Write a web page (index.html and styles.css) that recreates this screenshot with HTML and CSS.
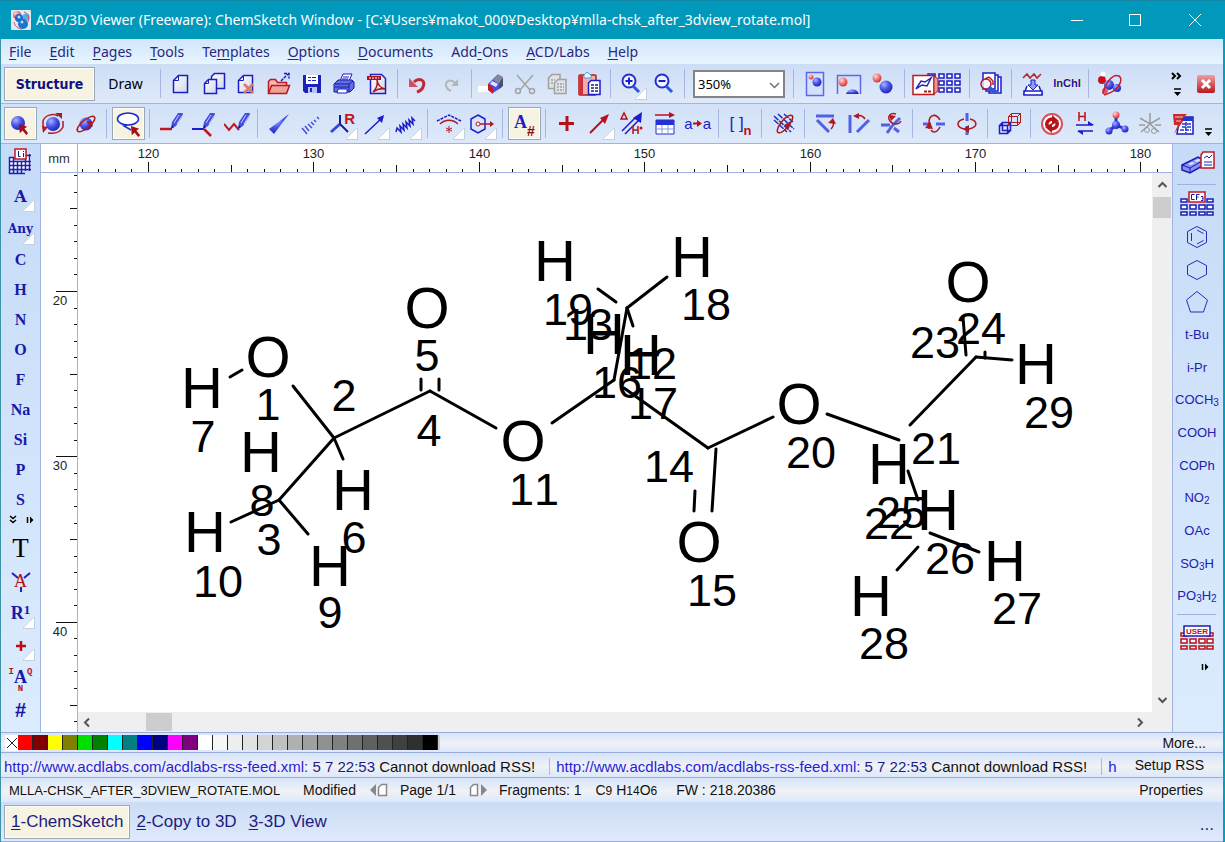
FILE: index.html
```html
<!DOCTYPE html>
<html lang="en">
<head>
<meta charset="utf-8">
<title>ACD/3D Viewer (Freeware): ChemSketch Window</title>
<link rel="stylesheet" href="styles.css">
</head>
<body>
<svg class="defs" width="0" height="0" aria-hidden="true">
  <defs>
    <radialGradient id="gb" cx=".35" cy=".3" r=".75"><stop offset="0" stop-color="#a9b4ff"/><stop offset=".5" stop-color="#4a55e8"/><stop offset="1" stop-color="#2020b8"/></radialGradient>
    <radialGradient id="gr" cx=".35" cy=".3" r=".75"><stop offset="0" stop-color="#ffd8d4"/><stop offset=".6" stop-color="#ec6a66"/><stop offset="1" stop-color="#c83038"/></radialGradient>
    <linearGradient id="gw" x1="0" y1="0" x2="1" y2="1"><stop offset="0" stop-color="#fff"/><stop offset="1" stop-color="#cfd6e6"/></linearGradient>
    <linearGradient id="gx" x1="0" y1="0" x2="0" y2="1"><stop offset="0" stop-color="#f0a0a0"/><stop offset="1" stop-color="#b81820"/></linearGradient>
    <symbol id="cursor" viewBox="0 0 12 13"><path fill="#a80c14" d="M1 1l9 3-3 2 4 5-2 2-4-5-3 3z"/></symbol>
    <symbol id="pen" viewBox="0 0 12 16"><path fill="#4450e0" d="M0 16l1-7 6-9h5l-1 4-6 9z"/><path d="M3 10l5-8M6 11l5-8" stroke="#c4ccff"/><path d="M0 16l1-4 2 2z" fill="#18188c"/></symbol>
  </defs>
</svg>
<div class="window">
  <header class="titlebar">
    <svg class="appicon" width="20" height="20" viewBox="0 0 20 20"><rect width="20" height="20" rx="1" fill="#dfe9f4"/><circle cx="6" cy="5" r="4" fill="url(#gr)"/><circle cx="15" cy="7" r="3.500" fill="#4fb0e8"/><circle cx="8" cy="8" r="4" fill="#1f68c8"/><circle cx="12" cy="14" r="5" fill="#1a74cc"/><path d="M3 12c1 5 5 7 8 7M13 2c4 1 6 5 4 10" fill="none" stroke="#d84858"/><circle cx="8" cy="7" r="1.500" fill="#a8e0fc"/><circle cx="11" cy="12" r="1.500" fill="#a8e0fc"/></svg>
    <h1 class="title">ACD/3D Viewer (Freeware): ChemSketch Window - [C:¥Users¥makot_000¥Desktop¥mlla-chsk_after_3dview_rotate.mol]</h1>
    <div class="caption">
      <button class="cap" aria-label="Minimize"><svg width="12" height="12"><path d="M0 6.500h12" stroke="#fff"/></svg></button>
      <button class="cap" aria-label="Maximize"><svg width="12" height="12"><path d="M.5.5h11v11H.5z" fill="none" stroke="#fff"/></svg></button>
      <button class="cap" aria-label="Close"><svg width="12" height="12"><path d="M0 0l12 12M12 0L0 12" stroke="#fff"/></svg></button>
    </div>
  </header>

  <nav class="menubar">
    <button><u>F</u>ile</button><button><u>E</u>dit</button><button><u>P</u>ages</button><button><u>T</u>ools</button><button>Te<u>m</u>plates</button><button><u>O</u>ptions</button><button><u>D</u>ocuments</button><button>Add<u>-</u>Ons</button><button><u>A</u>CD/Labs</button><button><u>H</u>elp</button>
  </nav>

  <div class="toolbar main-tools">
    <button class="mode on">Structure</button>
    <button class="mode draw">Draw</button>
    <i class="sep"></i>
    <div class="group g7">
      <button aria-label="New"><svg width="24" height="24"><path d="M9.500 3.500h9v17h-14v-12z" fill="url(#gw)" stroke="#1c1cc8" stroke-width="1.500"/><path d="M9.500 3.500v5h-5" fill="none" stroke="#1c1cc8"/></svg></button>
      <button aria-label="Duplicate"><svg width="24" height="24"><path d="M12.500 1.500h10v15h-13v-12z" fill="url(#gw)" stroke="#1c1cc8" stroke-width="1.500"/><path d="M6.500 7.500h8v14h-12v-10z" fill="url(#gw)" stroke="#1c1cc8" stroke-width="1.500"/><path d="M6.500 7.500v4h-4" fill="none" stroke="#1c1cc8"/></svg></button>
      <button aria-label="Delete page"><svg width="24" height="24"><path d="M9.500 3.500h9v17h-14v-12z" fill="url(#gw)" stroke="#1c1cc8" stroke-width="1.500"/><path d="M9.500 3.500v5h-5" fill="none" stroke="#1c1cc8"/><path d="M10 12l9 9M19 12l-9 9" stroke="#e07868" stroke-width="2.500"/></svg></button>
      <button aria-label="Open"><svg width="24" height="24"><path d="M1.500 21V9.500l2-2h5l2 3h9V14" fill="#f8b8b0" stroke="#b81820" stroke-width="1.500"/><path d="M1.500 21.500l3-8h18l-3 8z" fill="#f4a09a" stroke="#b81820" stroke-width="1.500"/><path d="M14 9l7-7M17 1.500h5v5" fill="none" stroke="#1c1cc8" stroke-width="1.500" stroke-dasharray="3 1"/></svg></button>
      <button aria-label="Save"><svg width="24" height="24"><path d="M3 3h18v18H5l-2-2z" fill="#1d22b8"/><path d="M6 3h12v9H6z" fill="#fff"/><path d="M8 5.500h8M8 8.500h8" stroke="#1d22b8" stroke-dasharray="3 1 5"/><path d="M8 15h9v6H8z" fill="#b8c4f8"/><path d="M10 16h2v4h-2z" fill="#1d22b8"/></svg></button>
      <button aria-label="Print"><svg width="24" height="24"><path d="M8 9l3-7h9l-3 7z" fill="#fff" stroke="#1c1cc8"/><path d="M11 5h6M10 7h6" stroke="#1c1cc8"/><path d="M2 12l4-4h14l2 2v6l-4 4H2z" fill="#6070e4" stroke="#18189c"/><path d="M3 12h14l4-3M3 15h14M17 12v8" stroke="#18189c" fill="none"/><path d="M6 17h9v4H5z" fill="#fff" stroke="#1c1cc8"/></svg></button>
      <button aria-label="Export PDF"><svg width="24" height="24"><path d="M5.500 2.500h11l4 4v15h-15z" fill="url(#gw)" stroke="#1c1cc8" stroke-width="1.500"/><path d="M2 4h14v4H2z" fill="#b01018"/><path d="M4 6h10" stroke="#fff" stroke-dasharray="2 1"/><path d="M8 20c4-4 5-8 4-12 1 6 4 8 8 9-4-1-8 0-12 3z" fill="none" stroke="#b01018" stroke-width="1.500"/></svg></button>
    </div>
    <i class="sep"></i>
    <div class="group g2">
      <button aria-label="Undo"><svg width="24" height="24"><path d="M8 10c5-5 12-2 9 5-1 3-3 4-6 5" fill="none" stroke="#c02838" stroke-width="3"/><path d="M3 6v9h9z" fill="#d05060"/></svg></button>
      <button aria-label="Redo" disabled><svg width="24" height="24"><path d="M16 11c-5-5-12-1-8 5 1 2 2 2 4 3" fill="none" stroke="#b4b4b8" stroke-width="2"/><path d="M19 7v7h-7z" fill="#b4b4b8"/></svg></button>
    </div>
    <i class="sep"></i>
    <div class="group g4">
      <button aria-label="Erase"><svg width="28" height="24"><path d="M0 14h17v6H0z" fill="#fff"/><path d="M10 12l9-9 5 3v9l-9 6-5-3z" fill="#4650e0"/><path d="M10 12l5 3v7l-5-4z" fill="#c41c28"/><path d="M15 8l5-6 5 3-4 7z" fill="#8088a0"/><path d="M21 12l4-7v9l-4 3z" fill="#4a5068"/><path d="M12 12l6 3 2-3-6-3z" fill="#dfe6f6"/></svg></button>
      <button aria-label="Cut" disabled><svg width="24" height="24"><path d="M4 3l13 15M20 3L7 18" stroke="#a4a4a4" stroke-width="1.500"/><g fill="none" stroke="#a4a4a4" stroke-width="1.500"><circle cx="5" cy="19" r="2.500"/><circle cx="19" cy="19" r="2.500"/></g></svg></button>
      <button aria-label="Copy" disabled><svg width="24" height="24"><g fill="#dfe3e8" stroke="#a0a0a0" stroke-width="1.500"><path d="M7 2.500h8v14H3.500V6z"/><path d="M13 7.500h8v14H9.500V11z"/></g><path d="M6 8h4M6 11h3M12 12h7M12 15h7M12 18h7" stroke="#a0a0a0" stroke-width="1.500" stroke-dasharray="2 1"/></svg></button>
      <button aria-label="Paste"><svg width="26" height="26"><rect x="2" y="4" width="17" height="20" rx="1" fill="#f2b0ac" stroke="#b81820" stroke-width="1.500"/><path d="M3 5h3v18H3z" fill="#cf3038"/><path d="M7 7V4l3-3 4 3v3z" fill="#eef4ff" stroke="#4aa0d8"/><path d="M14 9.500h9v14H11.500V12z" fill="#fff" stroke="#1c1cc8" stroke-width="1.500"/><path d="M14 14h7M14 17h7M14 20h7" stroke="#1c1c88" stroke-width="1.500" stroke-dasharray="3 1"/></svg></button>
    </div>
    <i class="sep"></i>
    <div class="group g2">
      <button class="more" aria-label="Zoom in"><svg width="24" height="24"><circle cx="10" cy="9" r="6.500" fill="#eef6ff" stroke="#2430d0" stroke-width="2"/><path d="M10 5.500v7M6.500 9h7" stroke="#1c1cc8" stroke-width="2"/><path d="M14 14l6 6" stroke="#2a58d8" stroke-width="3"/></svg></button>
      <button aria-label="Zoom out"><svg width="24" height="24"><circle cx="10" cy="9" r="6.500" fill="#eef6ff" stroke="#2430d0" stroke-width="2"/><path d="M6.500 9h7" stroke="#1c1cc8" stroke-width="2"/><path d="M14 14l6 6" stroke="#2a58d8" stroke-width="3"/></svg></button>
    </div>
    <i class="sep"></i>
    <div class="zoombox"><select aria-label="Zoom level"><option>350%</option><option>100%</option></select><svg class="chev" width="11" height="7"><path d="M1 1l4.500 4.500L10 1" fill="none" stroke="#707070" stroke-width="1.500"/></svg></div>
    <i class="sep"></i>
    <div class="group g3w">
      <button aria-label="Fit page"><svg width="24" height="26"><path d="M3.500 1.500h17v23h-17z" fill="#d4e0fc" stroke="#5c68ea" stroke-width="1.500"/><circle cx="8" cy="6" r="2.500" fill="url(#gr)"/><circle cx="14" cy="11" r="4.500" fill="url(#gb)"/></svg></button>
      <button aria-label="Fit width"><svg width="26" height="24"><path d="M1.500 22V3.500h23V22" fill="none" stroke="#5c68ea" stroke-width="1.500"/><circle cx="7" cy="10" r="4.500" fill="url(#gr)"/><path d="M10 22a7 7 0 0 1 13 0z" fill="url(#gb)"/></svg></button>
      <button aria-label="Fit structure"><svg width="24" height="24"><circle cx="6" cy="6" r="4.500" fill="url(#gr)"/><circle cx="15" cy="15" r="6.500" fill="url(#gb)"/></svg></button>
    </div>
    <i class="sep"></i>
    <div class="group gw">
      <button aria-label="Template window"><svg width="50" height="24"><g fill="#fff" stroke="#1c1cc8" stroke-width="1.500"><path d="M16 2h7v4h-7zM27 2h5v4h-5zM35 2h5v4h-5zM43 2h5v4h-5zM27 9h5v4h-5zM35 9h5v4h-5zM43 9h5v4h-5zM27 16h5v4h-5zM35 16h5v4h-5zM43 16h5v4h-5z"/></g><path d="M1 3.500h21v19H1z" fill="#fff" stroke="#b81820" stroke-width="1.500"/><path d="M22 4l4 3v12l-4 3z" fill="#e89a98" stroke="#b81820"/><path d="M4 17l5-8 4 1 6-4-4 8-5-1z" fill="none" stroke="#2424b8" stroke-width="1.500"/><path d="M12 19.500h7" stroke="#b81820" stroke-width="2" stroke-dasharray="3 1"/></svg></button>
    </div>
    <i class="sep"></i>
    <div class="group g1">
      <button aria-label="Search"><svg width="24" height="24"><g fill="#fff" stroke="#1c1cc8" stroke-width="1.500"><path d="M10 5h12v16H10z"/><path d="M7 3h12v16H7z"/><path d="M4 1h12v16H4z"/></g><path d="M10 5l4 4M10 5l-4 2M14 9v4" stroke="#b81820" fill="none" stroke-width="1.500"/><circle cx="7" cy="12" r="5" fill="#eef4ff" fill-opacity=".8" stroke="#b81820" stroke-width="1.500"/><path d="M10 15l7 6" stroke="#2a58d8" stroke-width="3"/></svg></button>
    </div>
    <i class="sep"></i>
    <div class="group g2w">
      <button aria-label="Insert spectrum"><svg width="24" height="26"><path d="M2 7l4-4 3 4 4-4 3 4 4-4" fill="none" stroke="#b02830" stroke-width="1.500"/><path d="M6 15l-3 8h18l-3-8" fill="#fff" stroke="#1c1cc8" stroke-width="1.500"/><path d="M10 9h4v5h3l-5 5-5-5h3z" fill="#8fa0f4" stroke="#1c1cc8"/><path d="M3 20h18v4H3z" fill="#fff" stroke="#1c1cc8" stroke-width="1.500"/></svg></button>
      <button class="inchi">InChI</button>
    </div>
    <i class="sep"></i>
    <div class="group g1">
      <button aria-label="3D Viewer"><svg width="26" height="26"><circle cx="5" cy="9" r="4" fill="#c8101c"/><circle cx="6" cy="3" r="2.500" fill="#fff"/><circle cx="12" cy="7" r="3.500" fill="#dfe4f4"/><circle cx="12" cy="14" r="5" fill="url(#gb)"/><circle cx="20" cy="17" r="4" fill="url(#gb)"/><circle cx="8" cy="20" r="3" fill="#dc6068"/><path d="M7 24C22 20 27 8 22 5c-6-3-14 7-16 18" fill="none" stroke="#c02030" stroke-width="1.500"/></svg></button>
    </div>
    <div class="tail">
      <button class="ovf" aria-label="More tools"><svg width="12" height="24"><path d="M1 1l3 3-3 3M6 1l3 3-3 3" fill="none" stroke="#000" stroke-width="2"/><path d="M3 17h7" stroke="#000" stroke-width="1.500"/><path d="M3 20h7l-3.500 4z"/></svg></button>
      <button class="docclose" aria-label="Close document"><svg width="18" height="18"><rect width="18" height="18" rx="2" fill="url(#gx)"/><path d="M5 5l8 8M13 5l-8 8" stroke="#fff" stroke-width="3"/></svg></button>
    </div>
  </div>

  <div class="toolbar struct-tools">
    <div class="group g3">
      <button class="on" aria-label="Select/Move"><svg width="24" height="24"><circle cx="10" cy="11" r="7" fill="url(#gb)"/><use href="#cursor" x="10" y="11" width="11" height="12"/></svg></button>
      <button aria-label="Rotate"><svg width="24" height="24"><circle cx="12" cy="12" r="7" fill="url(#gb)"/><path d="M2 15V9c2-6 10-8 15-5M22 9v6c-3 6-9 7-15 6" fill="none" stroke="#b01820" stroke-width="1.500"/><path d="M14 1h7v6zM1 14l6 1-5 6z" fill="#b01820"/></svg></button>
      <button aria-label="3D Rotate"><svg width="24" height="24"><circle cx="12" cy="12" r="6.500" fill="url(#gb)"/><ellipse cx="12" cy="12" rx="11" ry="4" transform="rotate(-40 12 12)" fill="none" stroke="#b01820" stroke-width="1.500"/><path d="M14 14l3-3M13 10h5v5z" stroke="#b01820" fill="#b01820"/></svg></button>
    </div>
    <i class="sep"></i>
    <div class="group g1"><button class="on" aria-label="Lasso"><svg width="26" height="26"><ellipse cx="12" cy="8" rx="10.500" ry="6" fill="#fff" stroke="#1c2cd0" stroke-width="1.500"/><path d="M11 14l-3 1 7 4" fill="none" stroke="#1c2cd0" stroke-width="1.500"/><use href="#cursor" x="14" y="14" width="11" height="12"/></svg></button></div>
    <i class="sep"></i>
    <div class="group g3">
      <button aria-label="Draw normal"><svg width="26" height="26"><path d="M2 18h12" stroke="#c01820" stroke-width="2.500"/><use href="#pen" x="13" y="2" width="12" height="16"/></svg></button>
      <button aria-label="Draw continuous"><svg width="26" height="26"><path d="M1 18h12" stroke="#1c1cd0" stroke-width="2"/><path d="M13 18l7 7" stroke="#c01820" stroke-width="2.500"/><use href="#pen" x="12" y="2" width="12" height="16"/></svg></button>
      <button aria-label="Draw chain"><svg width="26" height="26"><path d="M0 13l5 6 5-6 5 6" fill="none" stroke="#c01820" stroke-width="2"/><use href="#pen" x="14" y="2" width="12" height="16"/></svg></button>
    </div>
    <i class="sep"></i>
    <div class="group g5n">
      <button aria-label="Up stereo bond"><svg width="24" height="24"><path d="M22 2L2 17l5 5z" fill="url(#gb)"/></svg></button>
      <button aria-label="Down stereo bond"><svg width="24" height="24"><path d="M3 16l5 6M6 14l4 5M9 12l4 4M12 10l3 3M15 8l2 2M18 5l2 2" stroke="#4450dc" stroke-width="1.500"/></svg></button>
      <button class="more" aria-label="Coordinating bonds"><svg width="28" height="28"><path d="M11 14V5" stroke="#18189c" stroke-width="2"/><path d="M11 14L2 22" stroke="#3a46dc" stroke-width="3"/><path d="M11 14l8 8" stroke="#18189c" stroke-width="2"/></svg><b class="rmark">R</b></button>
      <button class="more" aria-label="Arrow bond"><svg width="24" height="24"><path d="M2 22L20 5" stroke="#1c1cc8" stroke-width="1.500"/><path d="M14 6l7-3-2 8z" fill="#1c1cc8"/></svg></button>
      <button class="more" aria-label="Undefined bond"><svg width="24" height="24"><path d="M1 20l1-4 4 4-1-6 4 4-1-6 4 4-1-6 4 4-1-6 4 4-1-6 3 3" fill="none" stroke="#1c1cc8" stroke-width="1.500"/></svg></button>
    </div>
    <i class="sep"></i>
    <div class="group g2">
      <button class="more" aria-label="Bond fragment"><svg width="26" height="26"><path d="M1 10l12-6 12 6" fill="none" stroke="#1c1cc8" stroke-width="1.500" stroke-dasharray="3 1"/><path d="M4 13c5-5 13-5 18 0" fill="none" stroke="#b01820" stroke-width="1.500"/><path d="M13 15v7M10 17l6 3M16 17l-6 3" stroke="#b01820"/></svg></button>
      <button class="more" aria-label="Ring"><svg width="26" height="26"><path d="M9 4l7 4v10l-7 4-7-4V8z" fill="none" stroke="#1c1cc8" stroke-width="1.500"/><circle cx="9" cy="13" r="2" fill="#fff" stroke="#b01820"/><path d="M11 13h12" stroke="#b01820" stroke-width="1.500"/><path d="M21 10l4 3-4 3z" fill="#b01820"/></svg></button>
    </div>
    <i class="sep"></i>
    <div class="group g1"><button class="on glyph" aria-label="Auto numbering"><b class="anum">A</b><b class="hash">#</b></button></div>
    <i class="sep"></i>
    <div class="group g5">
      <button aria-label="Reaction plus"><svg width="24" height="24"><path d="M12 4v15M4 11.500h15" stroke="#b81018" stroke-width="3"/></svg></button>
      <button class="more" aria-label="Reaction arrow"><svg width="24" height="24"><path d="M2 21L15 8" stroke="#b81018" stroke-width="2"/><path d="M12 6l9-4-4 10z" fill="#b81018"/></svg></button>
      <button aria-label="Reaction conditions"><svg width="26" height="26"><path d="M3 20L17 6M6 23L20 9" stroke="#1c1cc8" stroke-width="1.500"/><path d="M14 7l9-6-1 11z" fill="#1c1cc8"/><path d="M2 8l3-6 3 6zM14 15v8M19 15v8M14 19h5" fill="none" stroke="#b81018" stroke-width="1.500"/><circle cx="22" cy="17" r="1.500" fill="#b81018"/></svg></button>
      <button aria-label="Table"><svg width="24" height="26"><path d="M2 4h17" stroke="#b81018" stroke-width="1.500"/><path d="M16 1l6 3-6 3z" fill="#b81018"/><path d="M3 9h18v14H3z" fill="#fff" stroke="#2430c0"/><path d="M3 9h18v5H3z" fill="#2430d8"/><path d="M3 18h18M9 14v9M15 14v9" stroke="#8898e0"/></svg></button>
      <button aria-label="Atom mapping" class="glyph map">a<svg width="10" height="9"><path d="M0 4.500h6" stroke="#b81018" stroke-width="2"/><path d="M4 1l5 3.500L4 8z" fill="#b81018"/></svg>a</button>
    </div>
    <i class="sep"></i>
    <div class="group g1"><button class="glyph brak" aria-label="Brackets">[ ]<small>n</small></button></div>
    <i class="sep"></i>
    <div class="group g1"><button aria-label="Clean structure"><svg width="24" height="24"><path d="M2 8l13 12M2 4l17 16M6 2l16 15M12 2l9 8" stroke="#2030b8" stroke-width="1.500" stroke-dasharray="6 1"/><ellipse cx="13" cy="12" rx="11" ry="4" transform="rotate(-50 13 12)" fill="none" stroke="#b01820" stroke-width="1.500"/><path d="M12 13l7-4-2 8z" fill="#b01820"/></svg></button></div>
    <i class="sep"></i>
    <div class="group g3">
      <button aria-label="Set bond horizontal"><svg width="24" height="24"><path d="M2 4h18M3 8l12 12" stroke="#5260e6" stroke-width="3"/><path d="M17 17c3-3 3-6 1-8" fill="none" stroke="#b01820" stroke-width="1.500"/><path d="M14 11l5-5 3 6z" fill="#b01820"/></svg></button>
      <button aria-label="Set bond vertical"><svg width="24" height="24"><path d="M3 3v18M10 20L22 8" stroke="#5260e6" stroke-width="3"/><path d="M18 7c-2-3-5-4-8-3" fill="none" stroke="#b01820" stroke-width="1.500"/><path d="M6 4l6-3v6z" fill="#b01820"/></svg></button>
      <button aria-label="Flip on bond"><svg width="24" height="24"><path d="M1 13h9M12 14l8-8M7 21l5-7M14 16l5 4" stroke="#5260e6" stroke-width="3" fill="none"/><path d="M16 2c-6-2-9 3-6 7 3 4 9 4 11 0" fill="none" stroke="#b01820" stroke-width="1.500"/><path d="M9 3l7 1-5 5z" fill="#b01820"/></svg></button>
    </div>
    <i class="sep"></i>
    <div class="group g2">
      <button aria-label="Flip top to bottom"><svg width="24" height="24"><path d="M1 12h8M14 12h9" stroke="#5260e6" stroke-width="3"/><path d="M18 8c-4-7-11-6-11 3v6M18 15c-3 6-7 6-9 3" fill="none" stroke="#b01820" stroke-width="1.500"/><path d="M3 16l5-6 3 7z" fill="#b01820"/></svg></button>
      <button aria-label="Flip left to right"><svg width="24" height="24"><path d="M12 1v8M12 14v9" stroke="#5260e6" stroke-width="3"/><path d="M9 7c-8 2-8 8 0 10M15 7c8 2 8 8-1 10h-4" fill="none" stroke="#b01820" stroke-width="1.500"/><path d="M14 13l-6 4 6 4z" fill="#b01820"/></svg></button>
    </div>
    <i class="sep"></i>
    <div class="group g1"><button aria-label="3D structure"><svg width="24" height="24"><path d="M1.500 13.500h8v8h-8zM4.500 10.500h8v8h-8zM1.500 13.500l3-3M9.500 13.500l3-3M9.500 21.500l3-3" fill="none" stroke="#1c1cc8" stroke-width="1.500"/><path d="M10.500 4.500h9v9h-9zM13.500 1.500h9v9h-9zM10.500 4.500l3-3M19.500 4.500l3-3M19.500 13.500l3-3" fill="none" stroke="#b01820"/></svg></button></div>
    <i class="sep"></i>
    <div class="group g5">
      <button aria-label="Refresh"><svg width="24" height="24"><circle cx="12" cy="12" r="10" fill="#fff" stroke="#dc5058" stroke-width="2"/><path d="M7 14c-1-5 3-8 7-6M17 10c1 5-3 8-7 6" fill="none" stroke="#b81018" stroke-width="3.500"/><path d="M12 3l7 6-7 4zM12 21l-7-6 7-4z" fill="#b81018"/></svg></button>
      <button aria-label="Tautomers"><svg width="24" height="26"><path d="M6 1v9M12 1v9M6 5.500h6" stroke="#b81018" stroke-width="1.500"/><path d="M3 14h17M5 20h15" stroke="#1c1cc8" stroke-width="1.500"/><path d="M15 10l6 4h-6zM10 24l-6-4h6z" fill="#1c1cc8"/></svg></button>
      <button aria-label="Molecule 3D"><svg width="24" height="26"><path d="M11 5v10M11 14l-7 6M11 14l9 4" stroke="#2434d0" stroke-width="3"/><circle cx="11" cy="4" r="3.500" fill="url(#gr)"/><circle cx="11" cy="14" r="4" fill="url(#gb)"/><circle cx="4" cy="20" r="3.500" fill="url(#gb)"/><circle cx="20" cy="18" r="3.500" fill="url(#gb)"/></svg></button>
      <button aria-label="Check stereo" disabled><svg width="24" height="24"><path d="M12 1v12M2 6l10 6 10-6M3 20l9-8 9 8M1 13h6M17 13h6" fill="none" stroke="#9a9a9a" stroke-width="1.500"/><circle cx="9" cy="18" r="2.500" fill="none" stroke="#9a9a9a"/><circle cx="16" cy="19" r="2.500" fill="none" stroke="#9a9a9a"/></svg></button>
      <button aria-label="Properties table"><svg width="24" height="24"><path d="M9 5h13v17H6z" fill="#fff" stroke="#1c1cb8" stroke-width="1.500"/><path d="M9 5h13v4H9z" fill="#2434d0"/><path d="M11 12h9M11 15h9M9 18h11M15 10v11" stroke="#2434d0" stroke-width="1.500" stroke-dasharray="4 1"/><path d="M2 2h14l-6 6h3L3 22l4-9H3z" fill="#c82830"/><path d="M4 5h8M5 9h5" stroke="#f8c8c8"/></svg></button>
    </div>
    <button class="ovf low" aria-label="Toolbar options"><svg width="10" height="9"><path d="M1 1h7" stroke="#000" stroke-width="1.500"/><path d="M1 4h7L4.500 8z"/></svg></button>
  </div>

  <div class="workspace">
    <aside class="palette left">
      <button class="ptable" aria-label="Periodic table"><svg width="26" height="28"><path d="M2 10h4v3h12V7h5v15H2z" fill="#fff"/><path d="M1.500 9v17M5.500 9v17M9.500 13v13M13.500 13v13M17.500 6v17M21.500 6v17M1 9.500h5M1 13.500h22M1 17.500h22M1 21.500h22M1 25.500h16M17 7.500h6" stroke="#2020b8" stroke-width="1.500"/><rect x="7" y="1" width="11" height="10" fill="#fff" stroke="#c01820" stroke-width="1.500"/><path d="M10.500 3v5.500h2M15.500 5v4M15.500 3v1" fill="none" stroke="#1c1c88"/></svg></button>
      <button class="more a1">A</button>
      <button class="more any">Any</button>
      <button>C</button><button>H</button><button>N</button><button>O</button><button>F</button><button>Na</button><button>Si</button><button>P</button><button>S</button>
      <div class="arrows"><svg width="30" height="10"><path d="M5 1l3 2.500L11 1M5 5l3 2.500L11 5" fill="none" stroke="#000" stroke-width="1.500"/><path d="M22.500 2v6" stroke="#000" stroke-width="1.500"/><path d="M25 1.500l3.500 3.500-3.500 3.500z"/></svg></div>
      <div class="lower">
        <button class="ttool">T</button>
        <button class="xa" aria-label="Change position"><svg width="22" height="22"><path d="M2 3l6 5M20 3l-6 5M11 17v5" stroke="#2020c0" stroke-width="2"/></svg><b>A</b></button>
        <button class="more r1">R<sup>1</sup></button>
        <button class="more" aria-label="Charge"><svg width="12" height="12"><path d="M6 1v10M1 6h10" stroke="#b81018" stroke-width="2.500"/></svg></button>
        <button class="iaq"><sup>I</sup><b>A</b><sup>Q</sup><small>N</small></button>
        <button class="num">#</button>
      </div>
    </aside>

    <main class="editor">
      <div class="corner">mm</div>
      <svg class="hruler" role="img" aria-label="Horizontal ruler"></svg>
      <svg class="vruler" role="img" aria-label="Vertical ruler"></svg>
      <svg class="canvas" role="img" aria-label="Structure drawing"></svg>
      <div class="vscroll"><svg width="11" height="8"><path d="M1.500 6L5.500 2l4 4" fill="none" stroke="#555" stroke-width="2"/></svg><i></i><svg class="end" width="11" height="8"><path d="M1.500 1l4 4 4-4" fill="none" stroke="#555" stroke-width="2"/></svg></div>
      <div class="hscroll"><svg width="8" height="11"><path d="M6 1.500L2 5.500l4 4" fill="none" stroke="#555" stroke-width="2"/></svg><i></i><svg class="end" width="8" height="11"><path d="M1 1.500l4 4-4 4" fill="none" stroke="#555" stroke-width="2"/></svg></div>
    </main>

    <aside class="palette right">
      <button class="dict" aria-label="Dictionary"><svg width="36" height="26"><path d="M2 15l16-8 6 3v5l-14 8-8-3z" fill="#8492f0" stroke="#1c1cb0" stroke-width="1.500"/><path d="M2 15l8 3v5M10 18l14-8" fill="none" stroke="#1c1cb0"/><path d="M8 14l4-2 3 1-4 2zM14 11l4-2 3 1-4 2z" fill="#dfe6ff"/><path d="M23 2h11v16H21V5z" fill="#fff" stroke="#c01820" stroke-width="1.500"/><path d="M24 8l3-2 2 2 3-3M24 12h8M24 15h8" stroke="#2020a8" fill="none"/></svg></button>
      <i class="rule"></i>
      <div class="radicals">
        <button aria-label="CF3 radicals table"><svg width="36" height="26"><g fill="#fff" stroke="#1c1cb8" stroke-width="1.500"><path d="M2 8h6v3H2zM28 8h6v3h-6zM2 14h6v4H2zM11 14h6v4h-6zM20 14h6v4h-6zM28 14h6v4h-6zM2 21h6v3H2zM11 21h6v3h-6zM20 21h6v3h-6zM28 21h6v3h-6z"/><path d="M10 1h16v10H10z" stroke="#c01820"/></g><path d="M15.500 3.500h-3v5h3M17.500 9V3.500h3M17.500 6h2M22 5.500h2v2h-1 1v2h-2" fill="none" stroke="#1c1c98"/></svg></button>
        <button aria-label="Benzene"><svg width="24" height="24"><path d="M12 1.500l9.500 5v11l-9.500 5-9.500-5v-11zM6.500 8v8M12 5l6.500 3.500M12 19l6.500-3.500" fill="none" stroke="#2a2ab8"/></svg></button>
        <button aria-label="Cyclohexane"><svg width="24" height="22"><path d="M12 1.500l9.500 5v9l-9.500 5-9.500-5v-9z" fill="none" stroke="#2a2ab8"/></svg></button>
        <button aria-label="Cyclopentane"><svg width="24" height="24"><path d="M12 1.500l10.500 8.500-4 12h-13l-4-12z" fill="none" stroke="#2a2ab8"/></svg></button>
        <button>t-Bu</button><button>i-Pr</button><button>COCH<sub>3</sub></button><button>COOH</button><button>COPh</button><button>NO<sub>2</sub></button><button>OAc</button><button>SO<sub>3</sub>H</button><button>PO<sub>3</sub>H<sub>2</sub></button>
      </div>
      <i class="rule"></i>
      <button class="user" aria-label="User radicals"><svg width="36" height="26"><g fill="#fff" stroke="#b81018" stroke-width="1.500"><path d="M2 8h6v3H2zM28 8h6v3h-6zM2 14h6v4H2zM11 14h6v4h-6zM20 14h6v4h-6zM28 14h6v4h-6zM2 21h6v3H2zM11 21h6v3h-6zM20 21h6v3h-6zM28 21h6v3h-6z"/><path d="M5 1h26v10H5z" stroke="#1c1cb8"/></g></svg><b>USER</b></button>
      <div class="play"><svg width="10" height="8"><path d="M2.500 1v6" stroke="#000" stroke-width="1.500"/><path d="M5 .5L8.500 4 5 7.500z"/></svg></div>
    </aside>
  </div>

  <div class="bar colors">
    <button class="nocolor" aria-label="No color"><svg width="12" height="12"><path d="M1 1l10 10M11 1L1 11" stroke="#222"/></svg></button>
    <div class="swatches"></div>
    <button class="barbtn">More...</button>
  </div>
  <div class="bar rss">
    <div class="feed"><a href="#">http://www.acdlabs.com/acdlabs-rss-feed.xml:</a> <time>5 7 22:53</time> Cannot download RSS!<i></i><a href="#">http://www.acdlabs.com/acdlabs-rss-feed.xml:</a> <time>5 7 22:53</time> Cannot download RSS!<i></i><a href="#">h</a></div>
    <button class="barbtn">Setup RSS</button>
  </div>
  <footer class="bar status">
    <span class="fname">MLLA-CHSK_AFTER_3DVIEW_ROTATE.MOL</span>
    <span class="mod">Modified</span>
    <button class="pg" aria-label="Previous page"><svg width="18" height="14"><path d="M0 7l6-6v12z" fill="#888"/><path d="M11.500 1.500h5v11h-8v-8z" fill="#fff" stroke="#888" stroke-width="1.500"/></svg></button>
    <span class="page">Page 1/1</span>
    <button class="pg" aria-label="Next page"><svg width="18" height="14"><path d="M4.500 1.500h4v11h-7v-8z" fill="#fff" stroke="#888" stroke-width="1.500"/><path d="M12 1l6 6-6 6z" fill="#888"/></svg></button>
    <span class="frag">Fragments: 1</span>
    <span class="formula">C<small>9</small> H<small>14</small>O<small>6</small></span>
    <span class="fw">FW : 218.20386</span>
    <button class="barbtn">Properties</button>
  </footer>
  <div class="tabs">
    <button class="on"><u>1</u>-ChemSketch</button><button><u>2</u>-Copy to 3D</button><button><u>3</u>-3D View</button>
    <span class="dots">...</span>
  </div>
</div>
<script src="app.js"></script>
</body>
</html>
```
FILE: app.js
```js
const NS = 'http://www.w3.org/2000/svg';
function add(parent, tag, attrs, text) {
  const el = document.createElementNS(NS, tag);
  for (const k in attrs) el.setAttribute(k, attrs[k]);
  if (text !== undefined) el.textContent = text;
  parent.appendChild(el);
  return el;
}

// Window coordinates of the drawing area's top left corner
const ORIGIN = { x: 78, y: 173 };
const MM = 16.54;

const h = document.querySelector('.hruler');
for (let mm = 116; mm <= 181; mm++) {
  const x = Math.round(148 + (mm - 120) * MM) - ORIGIN.x + 0.5;
  const len = mm % 10 === 0 ? 10 : mm % 5 === 0 ? 7 : 3;
  add(h, 'line', { x1: x, x2: x, y1: 28 - len, y2: 28 });
  if (mm % 10 === 0) add(h, 'text', { x: x, y: 14, 'text-anchor': 'middle' }, mm);
}
const v = document.querySelector('.vruler');
for (let mm = 13; mm <= 46; mm++) {
  const y = Math.round(291 + (mm - 20) * MM) - ORIGIN.y + 0.5;
  const len = mm % 10 === 0 ? 21 : mm % 5 === 0 ? 7 : 3;
  add(v, 'line', { x1: 36 - len, x2: 36, y1: y, y2: y });
  if (mm % 10 === 0) add(v, 'text', { x: 19, y: y + 13, 'text-anchor': 'middle' }, mm);
}

const bonds = [
  [230,377,242,370],[293,386,334,438],[334,438,430,391],[334,438,343,459],[334,438,279,500],
  [279,500,231,522],[279,500,308,534],[421,379,421,390],[439,379,439,390],[430,391,496,428],
  [552,423,614,380],[614,380,627,308],[627,308,667,277],[598,289,616,302],[627,308,633,326],
  [624,388,708,448],[708,448,773,417],[695,491,694,511],[716,449,712,511],[827,414,899,440],
  [910,425,976,357],[976,357,1012,360],[963,317,966,355],[985,352,985,358],[908,471,918,500],
  [930,533,979,552],[918,547,897,570]
];
const atoms = [
  ['H',555,281],['H',692,277],['H',604,354],['H',641,375],['O',968,302],['H',1036,384],['H',889,484],
  ['H',938,530],['H',1005,581],['H',871,616],['O',427,328],['O',268,377],['H',202,408],['H',261,472],
  ['H',353,510],['H',205,552],['H',330,586],['O',523,461],['O',799,424],['O',699,562]
];
const numbers = [
  [19,568,325],[18,706,320],[13,588,340],[12,652,379],[16,617,398],[17,653,419],[24,981,344],
  [23,935,358],[29,1049,428],[21,936,464],[25,901,528],[22,889,539],[26,950,574],[27,1017,624],
  [28,884,659],[5,427,371],[1,268,420],[7,203,452],[2,344,411],[4,429,446],[8,262,516],[6,354,553],
  [10,218,597],[3,269,555],[9,330,628],[11,534,505],[20,811,468],[14,669,482],[15,712,606]
];
const g = add(document.querySelector('.canvas'), 'g', { transform: `translate(${-ORIGIN.x} ${-ORIGIN.y})` });
for (const [x1, y1, x2, y2] of bonds) add(g, 'line', { x1, y1, x2, y2 });
for (const [t, x, y] of atoms) add(g, 'text', { class: 'atom', x, y }, t);
for (const [t, x, y] of numbers) add(g, 'text', { class: 'idx', x, y }, t);

const colors = ['#ff0000','#800000','#ffff00','#808000','#00e000','#008000','#00ffff','#008080','#0000ff','#000080','#ff00ff','#800080',
  '#ffffff','#f6f6f6','#eeeeee','#e2e2e2','#d4d4d4','#c0c0c0','#b0b0b0','#a0a0a0','#909090','#808080','#707070','#606060','#505050','#404040','#303030','#000000'];
const sw = document.querySelector('.swatches');
for (const c of colors) {
  const b = document.createElement('button');
  b.style.background = c;
  b.setAttribute('aria-label', c);
  sw.appendChild(b);
}
```
FILE: styles.css
```css
* { box-sizing: border-box; }
html, body { height: 100%; }
body { margin: 0; font-family: "Liberation Sans", Arial, sans-serif; overflow: hidden; }
button { margin: 0; padding: 0; border: 0; background: none; font: inherit; color: inherit; line-height: 1; white-space: nowrap; }
svg { display: block; flex: none; }
.defs { position: absolute; }
.window { height: 100vh; display: flex; flex-direction: column; border-left: 1px solid #3a93a8; border-right: 2px solid #00a0be; background: #d8e6f8; }

.titlebar { flex: none; height: 39px; margin-left: -1px; margin-right: -2px; display: flex; align-items: center; background: #0099bc; color: #fff; border-top: 1px solid #1588a8; }
.appicon { margin-left: 11px; }
.title { margin: 0 0 0 5px; font: 400 14px/20px "Noto Sans", sans-serif; white-space: nowrap; }
.caption { margin-left: auto; display: flex; height: 100%; }
.cap { width: 58px; display: grid; place-items: center; }
.caption .cap:last-child { width: 61px; }

.menubar { flex: none; height: 25px; display: flex; align-items: center; gap: 18px; padding-left: 8px; background: linear-gradient(#d2e5fb, #e8f5ff); font: 14px "Noto Sans", sans-serif; color: #282880; }
.menubar button { line-height: 20px; }
u { text-underline-offset: 2px; }

.toolbar { flex: none; height: 40px; display: flex; align-items: center; padding-left: 3px; background: linear-gradient(#cdddf6, #dfeafa); border-bottom: 1px solid #a0b4e4; }
.struct-tools { background: linear-gradient(#d2e1f8, #dde9fa); }
.sep { flex: none; width: 1px; height: 29px; margin: 0 4px; background: #a6b6e0; }
.struct-tools .sep { margin-right: 5px; }
.group { flex: none; height: 33px; display: grid; grid-auto-flow: column; grid-auto-columns: minmax(0, 1fr); }
.group button { position: relative; display: flex; align-items: center; justify-content: center; }
.g1 { width: 33px; } .g2 { width: 65px; } .g3 { width: 98px; } .g4 { width: 130px; } .g5 { width: 163px; } .g7 { width: 228px; }
.g5n { width: 160px; } .g3w { width: 102px; } .g2w { width: 68px; } .gw { width: 56px; }
.on { background: #f7f3e2; border: 1px solid #98a8b8; box-shadow: inset 0 0 0 1px #fffdf4; }
.mode { width: 91px; height: 34px; font: 700 14px "DejaVu Sans Condensed", "Noto Sans", sans-serif; color: #101080; }
.mode.draw { width: 61px; font: 400 14px "Noto Sans", sans-serif; color: #000; }
.more { position: relative; }
.more::after { content: ""; position: absolute; right: 1px; bottom: 0; width: 11px; height: 11px; background: linear-gradient(135deg, transparent 46%, #a8b4c8 47%, #fff 54%); border-right: 1px solid #c4d0e2; border-bottom: 1px solid #c4d0e2; }
.zoombox { position: relative; margin: 0 4px; width: 92px; height: 28px; }
.zoombox select { appearance: none; width: 100%; height: 100%; margin: 0; padding: 0 0 0 3px; border: 2px solid #848484; border-radius: 0; background: #fff; font: 13px "Noto Sans", sans-serif; color: #000; }
.chev { position: absolute; right: 5px; top: 12px; }
.inchi { font-size: 11px; font-weight: 700; color: #1818b0; text-shadow: 0 0 2px #fff0a0, 0 0 2px #fff0a0; }
.tail { margin-left: auto; margin-right: 8px; display: flex; align-items: center; gap: 14px; }
.low { margin: 17px 9px 0 auto; }
.rmark { position: absolute; right: 4px; top: 4px; font: 700 15px/15px "Liberation Sans", sans-serif; color: #c01820; }
.glyph { color: #1c1cc8; }
.anum { font: 700 18px/20px "Liberation Serif", serif; margin-top: -4px; }
.hash { font-size: 14px; color: #8c1018; align-self: flex-end; line-height: 16px; }
.map { font-size: 15px; }
.brak { font-size: 17px; }
.brak small { font-size: 13px; font-weight: 700; color: #b81018; align-self: flex-end; margin-bottom: 3px; }

.workspace { flex: 1; min-height: 0; display: grid; grid-template-columns: 39px minmax(0, 1fr) 50px; border-bottom: 1px solid #98acdc; }
.palette { display: flex; flex-direction: column; background: linear-gradient(#c6dbf7, #dcecfe); }
.palette button { position: relative; flex: none; height: 30px; display: flex; align-items: center; justify-content: center; }
.left { font: 700 16px "Liberation Serif", serif; color: #1818a8; }
.left .ptable { height: 36px; }
.left .a1 { height: 32px; font: 700 16px "DejaVu Serif", serif; }
.left .any { height: 33px; font: 700 12px "DejaVu Serif", serif; }
.left .more::after { right: 5px; bottom: 1px; }
.left .a1::after, .left .any::after { bottom: 0; }
.arrows { height: 10px; margin: 0 0 7px 4px; }
.lower { display: grid; grid-auto-rows: 1fr; height: 195px; }
.palette .lower button { height: auto; }
.ttool { font-weight: 400; font-size: 27px; color: #000; }
.xa b { position: absolute; font-size: 18px; font-weight: 400; color: #b81018; }
.r1 { font-size: 18px; }
.r1 sup { font-size: 13px; margin-top: -8px; }
.iaq { font-size: 18px; }
.iaq sup, .iaq small { font: 700 9px/10px "Liberation Mono", monospace; color: #b81018; }
.iaq sup { align-self: flex-start; margin-top: 5px; }
.iaq b { margin-top: -2px; }
.iaq small { position: absolute; bottom: 1px; }
.num { font: 700 20px "Liberation Sans", sans-serif; }

.editor { display: grid; grid-template: 29px minmax(0, 1fr) 20px / 37px minmax(0, 1fr) 20px; background: #fff; border-left: 1px solid #a0b4e4; border-right: 1px solid #a0b4e4; }
.corner { display: grid; place-items: center; font-size: 13px; border-bottom: 1px solid #a0b4e4; border-right: 1px solid #a0b4e4; color: #333; }
.hruler { grid-column: 2 / 4; width: 100%; height: 29px; border-bottom: 1px solid #a0b4e4; font-size: 13px; fill: #222; }
.hruler line, .vruler line { stroke: #111; }
.vruler { grid-row: 2 / 4; width: 37px; height: 100%; border-right: 1px solid #a0b4e4; font-size: 13px; fill: #222; }
.canvas { grid-area: 2 / 2; width: 100%; height: 100%; }
.canvas line { stroke: #000; stroke-width: 3; stroke-linecap: round; }
.canvas text { text-anchor: middle; fill: #000; font-kerning: none; }
.atom { font-size: 58px; }
.idx { font-size: 45px; }
.vscroll { grid-area: 2 / 3; background: #efefef; display: flex; flex-direction: column; align-items: center; padding: 8px 0 7px; }
.vscroll i { width: 18px; height: 21px; margin-top: 8px; background: #cdcdcd; }
.vscroll .end { margin-top: auto; }
.hscroll { grid-area: 3 / 2 / 4 / 4; background: #efefef; display: flex; align-items: center; padding: 0 27px 0 5px; }
.hscroll i { width: 26px; height: 18px; margin-left: 55px; background: #cdcdcd; }
.hscroll .end { margin-left: auto; }

.right { font: 13px "Liberation Sans Narrow", "Liberation Sans", sans-serif; color: #2020b0; }
.right .dict { height: 38px; }
.right .rule { flex: none; height: 1px; margin: 2px 7px 3px 4px; background: #a0b0e0; }
.radicals { flex: none; height: 424px; display: grid; grid-auto-rows: 1fr; }
.palette .radicals button { height: auto; margin-right: 2px; }
.radicals sub { font-size: 10px; line-height: 10px; vertical-align: baseline; margin-top: 7px; }
.right .user { height: 40px; margin-right: 2px; }
.user b { position: absolute; top: 9px; font: 700 8px/10px "Liberation Sans", sans-serif; color: #b81018; }
.play { margin: 5px 0 0 27px; }

.bar { flex: none; display: flex; align-items: center; background: linear-gradient(#d6e4fa, #f0f2f6 55%, #dce8fa); }
.barbtn { margin-left: auto; font: 14px "Liberation Sans", sans-serif; color: #111; }
.colors { height: 20px; border-bottom: 1px solid #98acdc; padding: 0 17px 0 4px; }
.nocolor { width: 13px; height: 16px; background: #fff; display: grid; place-items: center; }
.swatches { display: flex; border-right: 2px solid #ccc; }
.swatches button { width: 15px; height: 15px; border-right: 1px solid #222; }
.rss { height: 25px; border-bottom: 1px solid #98acdc; padding: 0 19px 0 3px; }
.feed { flex: 1; min-width: 0; overflow: hidden; white-space: nowrap; padding-top: 3px; font-size: 15px; line-height: 20px; color: #111; margin-right: 16px; }
.feed a { color: #2a1cd8; text-decoration: none; }
.feed time { color: #1c1c80; }
.feed i { display: inline-block; width: 1px; height: 17px; margin: 0 6px 0 14px; vertical-align: -3px; background: #a8bce4; }
.status { height: 24px; padding: 0 20px 0 8px; font-size: 14px; color: #111; }
.status span { white-space: nowrap; }
.status .fname { min-width: 280px; font-size: 13px; }
.status .mod { margin: 0 14px; }
.status .page { margin: 0 13px 0 12px; }
.status .frag { margin: 0 14px 0 12px; }
.status .formula { margin-right: 19px; }
.formula small { font-size: 12px; }
.tabs { flex: none; height: 40px; display: flex; align-items: center; padding: 0 9px 0 3px; background: linear-gradient(#cbdcf6, #dfeafb); border-bottom: 1px solid #98acdc; font-size: 17px; color: #1c1c80; }
.tabs button { height: 34px; padding: 0 6px; }
.dots { margin-left: auto; padding-top: 6px; }
```
